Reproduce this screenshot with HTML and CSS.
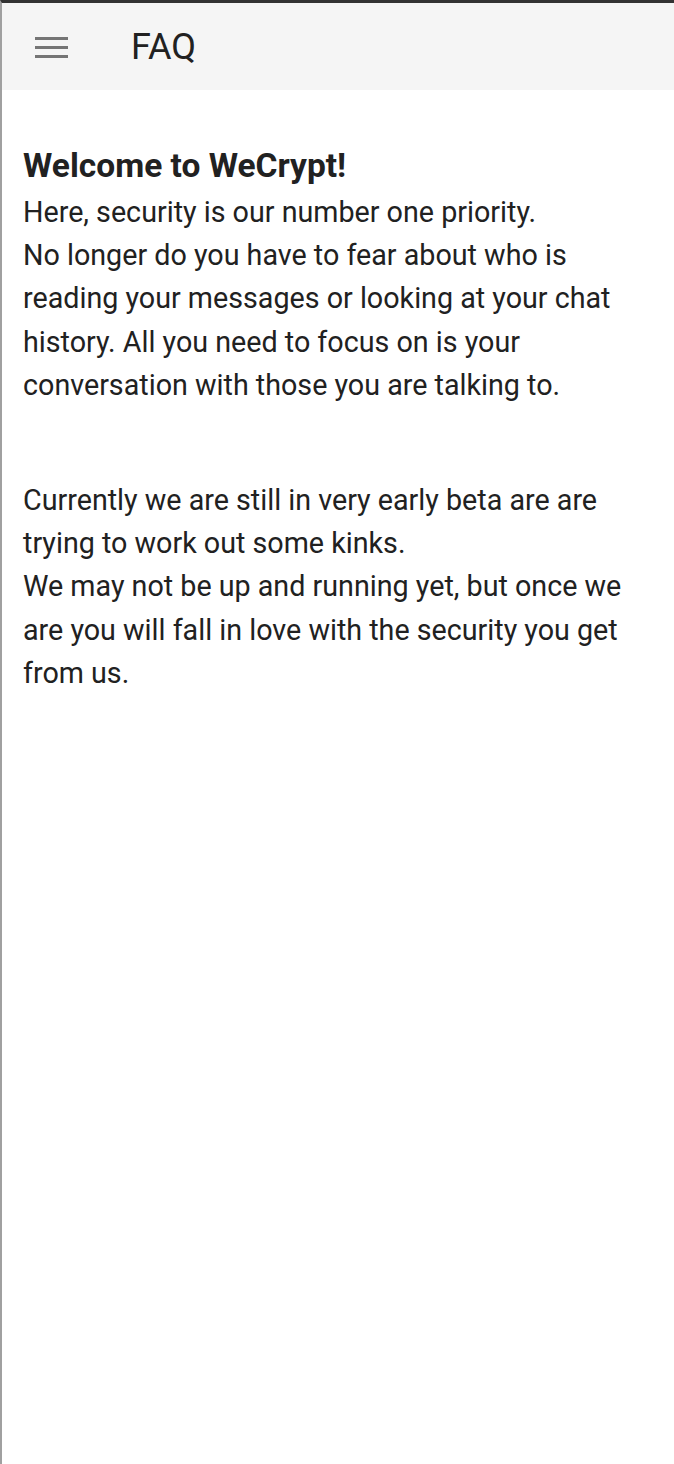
FILE: index.html
```html
<!DOCTYPE html>
<html>
<head>
<meta charset="utf-8">
<link rel="stylesheet" href="styles.css">
</head>
<body>
<div class="frame">
  <header class="toolbar">
    <svg class="menu" width="34" height="22" viewBox="0 0 34 22">
      <rect x="0" y="0" width="33" height="3" fill="#757575"/>
      <rect x="0" y="9" width="33" height="3" fill="#757575"/>
      <rect x="0" y="18" width="33" height="3" fill="#757575"/>
    </svg>
    <h1 class="title">FAQ</h1>
  </header>
  <main class="content">
    <h2 class="heading">Welcome to WeCrypt!</h2>
    <p class="para">Here, security is our number one priority.<br>No longer do you have to fear about who is reading your messages or looking at your chat history. All you need to focus on is your conversation with those you are talking to.</p>
    <p class="para">Currently we are still in very early beta are are trying to work out some kinks.<br>We may not be up and running yet, but once we are you will fall in love with the security you get from us.</p>
  </main>
</div>
</body>
</html>
```
FILE: styles.css
```css
html, body {
  margin: 0;
  padding: 0;
  background: #ffffff;
}
.frame {
  min-height: 1461px;
  border-top: 3px solid #333333;
  border-left: 2px solid #a0a0a0;
  font-family: Roboto, "Noto Sans", sans-serif;
  color: #212121;
}
.toolbar {
  height: 87px;
  background: #f5f5f5;
  display: flex;
  align-items: center;
  padding-left: 33px;
  box-sizing: border-box;
}
.menu {
  display: block;
  margin-top: 2px;
}
.title {
  margin: 0 0 0 62px;
  font-size: 36px;
  font-weight: 400;
  color: #212121;
}
.content {
  padding: 50px 22px 0 21px;
}
.heading {
  margin: 0;
  font-size: 33.5px;
  font-weight: 700;
  line-height: 51px;
}
.para {
  margin: 0;
  font-size: 28.7px;
  line-height: 43.2px;
}
.para + .para {
  margin-top: 72px;
}
```
